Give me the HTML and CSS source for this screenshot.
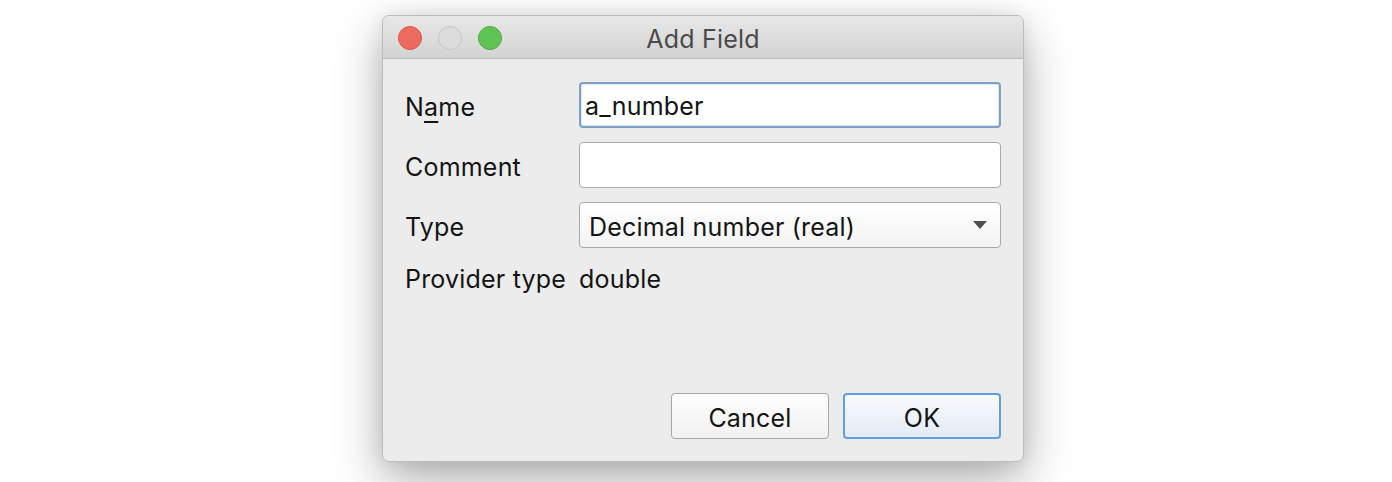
FILE: index.html
```html
<!DOCTYPE html>
<html>
<head>
<meta charset="utf-8">
<link rel="stylesheet" href="styles.css">
</head>
<body>
<div class="window">
  <div class="titlebar">
    <div class="lights">
      <span class="light red"></span>
      <span class="light grey"></span>
      <span class="light green"></span>
    </div>
    <div class="title">Add Field</div>
  </div>
  <div class="content">
    <div class="form">
      <label class="label">N<u>a</u>me</label>
      <div class="input focus">a_number</div>
      <label class="label">Comment</label>
      <div class="input"></div>
      <label class="label">Type</label>
      <div class="combo">
        <span>Decimal number (real)</span>
        <svg class="arrow" width="14" height="8" viewBox="0 0 14 8"><path d="M0 0H14L7 8Z" fill="#4f4f4f"/></svg>
      </div>
      <label class="label info">Provider type</label>
      <div class="value info">double</div>
    </div>
    <div class="buttons">
      <button class="btn">Cancel</button>
      <button class="btn default">OK</button>
    </div>
  </div>
</div>
</body>
</html>
```

FILE: styles.css
```css
html, body {
  margin: 0;
  padding: 0;
}
body {
  width: 1392px;
  height: 482px;
  background: #ffffff;
  overflow: hidden;
  font-family: Inter, "Liberation Sans", sans-serif;
  color: #141414;
  box-sizing: border-box;
  padding: 15px 0 0 382px;
}
.window {
  width: 642px;
  height: 447px;
  box-sizing: border-box;
  border: 1px solid #bdbdbd;
  border-radius: 7px;
  background: #ececec;
  box-shadow: 0 18px 48px rgba(0, 0, 0, 0.32), 0 0 18px rgba(0, 0, 0, 0.08);
  display: flex;
  flex-direction: column;
  overflow: hidden;
}
.titlebar {
  position: relative;
  height: 43px;
  box-sizing: border-box;
  background: linear-gradient(#e8e8e8, #d3d3d3);
  border-bottom: 1px solid #b9b9b9;
  display: flex;
  align-items: center;
  justify-content: center;
  flex-shrink: 0;
  padding-top: 3px;
}
.lights {
  position: absolute;
  left: 15px;
  top: 10px;
  display: flex;
  gap: 16px;
}
.light {
  width: 24px;
  height: 24px;
  border-radius: 50%;
  box-sizing: border-box;
}
.red { background: #ed6a5e; border: 1px solid #d9564a; }
.grey { background: #dcdcdc; border: 1px solid #c6c6c6; }
.green { background: #5fc454; border: 1px solid #4faa44; }
.title {
  font-size: 25px;
  color: #4a4a4a;
  letter-spacing: 0.2px;
}
.content {
  flex: 1;
  display: flex;
  flex-direction: column;
  padding: 23px 22px 22px 22px;
}
.form {
  display: grid;
  grid-template-columns: 160px 1fr;
  column-gap: 14px;
  row-gap: 14px;
  align-items: center;
}
.label, .value {
  font-size: 25px;
  letter-spacing: 0.2px;
  white-space: nowrap;
  line-height: 30px;
  padding-top: 4px;
}
.label.info, .value.info {
  padding-top: 2px;
}
.label u {
  text-underline-offset: 5px;
  text-decoration-thickness: 2px;
}
.input {
  height: 46px;
  box-sizing: border-box;
  background: #ffffff;
  border: 1.5px solid #a9a9a9;
  border-radius: 4px;
  font-size: 25px;
  letter-spacing: 0.2px;
  line-height: 44px;
  padding: 0 6px;
}
.input.focus {
  border: 2px solid #7f9fc4;
  box-shadow: inset 0 0 0 1px #dfe7f1;
  padding: 0 4px;
  line-height: 45px;
}
.combo {
  height: 46px;
  box-sizing: border-box;
  background: linear-gradient(#ffffff, #f3f3f3);
  border: 1.5px solid #a9a9a9;
  border-radius: 4px;
  font-size: 25px;
  letter-spacing: 0.2px;
  display: flex;
  align-items: center;
  justify-content: space-between;
  padding: 3px 13px 0 9px;
}
.arrow {
  margin-top: -3px;
}
.buttons {
  margin-top: auto;
  display: flex;
  justify-content: flex-end;
  gap: 14px;
}
.btn {
  width: 158px;
  height: 46px;
  box-sizing: border-box;
  font-family: Inter, "Liberation Sans", sans-serif;
  font-size: 25px;
  letter-spacing: 0.2px;
  color: #141414;
  border: 1.5px solid #a6a6a6;
  border-radius: 4px;
  background: linear-gradient(#fdfdfd, #f1f1f1);
  padding: 3px 0 0 0;
}
.btn.default {
  border: 2px solid #5e9fe9;
  background: linear-gradient(#f8fafd, #e4ebf5);
}
```
